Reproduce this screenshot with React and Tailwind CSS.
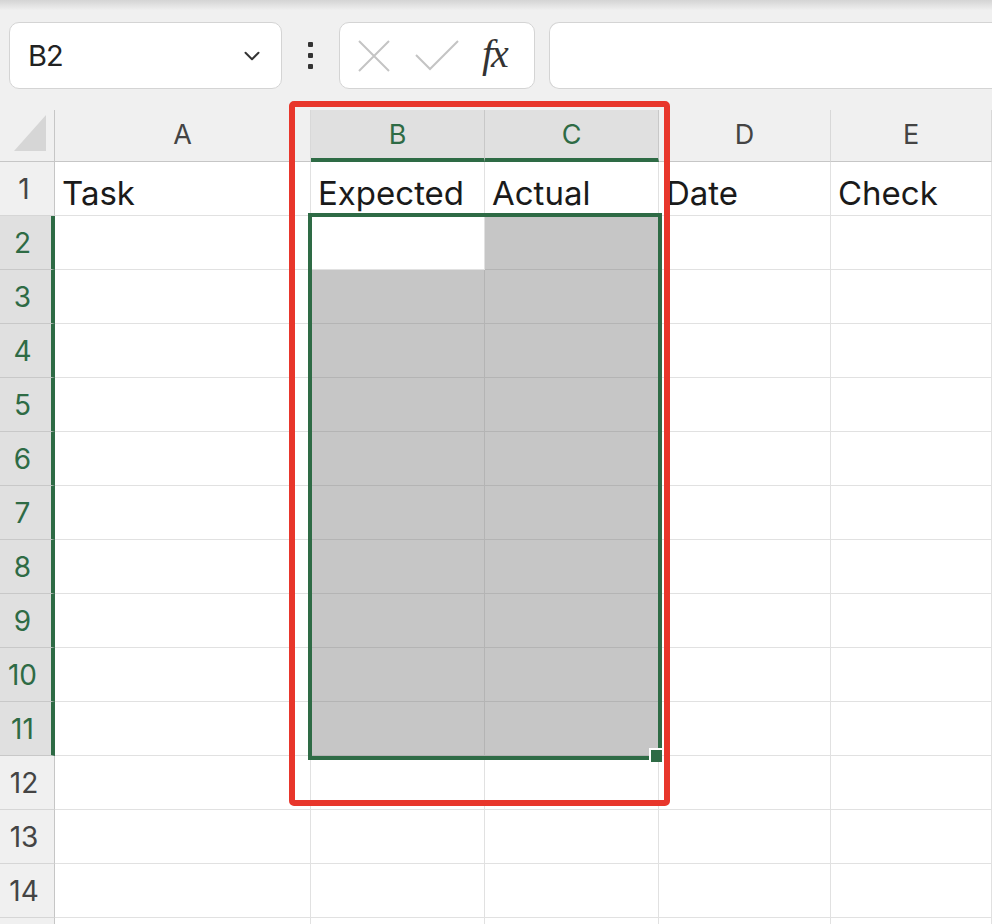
import { ChevronDown } from 'lucide-react';

const FONT = { fontFamily: "'Inter', 'Noto Sans', sans-serif" };

const COLS = ['A', 'B', 'C', 'D', 'E'];
const HEADER_ROW = ['Task', 'Expected', 'Actual', 'Date', 'Check'];
const ROWS = [1, 2, 3, 4, 5, 6, 7, 8, 9, 10, 11, 12, 13, 14, 15];

const isSelCol = (c) => c === 'B' || c === 'C';
const isSelRow = (r) => r >= 2 && r <= 11;

function Toolbar() {
  return (
    <div className="h-[110px] relative">
      <div className="absolute inset-x-0 top-0 h-[10px] bg-gradient-to-b from-[#d4d4d4] to-[#efefef]" />
      <div className="flex items-start pt-[22px] pl-[9px]">
        {/* Name box */}
        <div className="w-[273px] h-[67px] bg-white border border-[#d4d4d4] rounded-[10px] flex items-center justify-between pl-[18px] pr-[16px]">
          <span className="text-[29px] text-[#222] tracking-[-1px]">B2</span>
          <ChevronDown size={26} strokeWidth={1.8} className="text-[#333]" />
        </div>
        {/* Dots */}
        <div className="w-[57px] h-[67px] flex flex-col items-center justify-center gap-[6px]">
          <div className="w-[5px] h-[5px] bg-[#333] rounded-[1px]" />
          <div className="w-[5px] h-[5px] bg-[#333] rounded-[1px]" />
          <div className="w-[5px] h-[5px] bg-[#333] rounded-[1px]" />
        </div>
        {/* Cancel / Enter / fx */}
        <div className="w-[196px] h-[67px] bg-white border border-[#d4d4d4] rounded-[10px] flex items-center pl-[16px] gap-[22px]">
          <svg width="36" height="36" viewBox="0 0 36 36">
            <path d="M3 3 L33 33 M33 3 L3 33" stroke="#c4c4c4" strokeWidth="2" fill="none" />
          </svg>
          <svg width="46" height="34" viewBox="0 0 46 34">
            <path d="M2 16 L16 30 L44 2" stroke="#c4c4c4" strokeWidth="2" fill="none" />
          </svg>
          <span
            className="text-[40px] italic text-[#333] leading-none -mt-[4px] tracking-[-2px]"
            style={{ fontFamily: "'Liberation Serif', 'DejaVu Serif', serif" }}
          >
            fx
          </span>
        </div>
        {/* Formula bar */}
        <div className="ml-[14px] flex-1 h-[67px] bg-white border border-[#d4d4d4] rounded-l-[10px] border-r-0" />
      </div>
    </div>
  );
}

function ColumnHeaders() {
  return (
    <>
      <div className="h-[52px] bg-[#f0f0f0] border-b border-r border-[#c6c6c6] relative">
        <svg className="absolute left-[14px] top-[5px]" width="32" height="36" viewBox="0 0 32 36">
          <path d="M32 0 L32 36 L0 36 Z" fill="#d6d6d6" />
        </svg>
      </div>
      {COLS.map((c) => (
        <div
          key={c}
          className={
            isSelCol(c)
              ? 'h-[52px] bg-[#e0e0e0] border-r border-[#c8c8c8] border-b-[4px] border-b-[#2e6b45] flex items-center justify-center text-[27px] text-[#2e6b45] pt-[2px]'
              : 'h-[52px] bg-[#f0f0f0] border-r border-b border-[#d8d8d8] border-b-[#c6c6c6] flex items-center justify-center text-[27px] text-[#444]'
          }
        >
          {c}
        </div>
      ))}
    </>
  );
}

function cellClass(r, c) {
  const grey = isSelCol(c) && isSelRow(r) && !(r === 2 && c === 'B');
  if (grey) return 'h-[54px] bg-[#c6c6c6] border-r border-b border-[#b4b4b4]';
  return 'h-[54px] bg-white border-r border-b border-[#e1e1e1] flex items-end pl-[7px] pb-[5px] text-[33px] leading-none text-[#1a1a1a] whitespace-nowrap';
}

export default function App() {
  return (
    <div className="w-[992px] h-[924px] overflow-hidden bg-[#f0f0f0] relative" style={FONT}>
      <Toolbar />

      <div className="grid grid-cols-[55px_256px_174px_174px_172px_1fr]">
        <ColumnHeaders />
        {ROWS.map((r) => (
          <div key={r} className="contents">
            <div
              className={
                isSelRow(r)
                  ? 'h-[54px] bg-[#e0e0e0] border-b border-[#c8c8c8] border-r-[4px] border-r-[#2e6b45] flex items-center justify-center pr-[6px] text-[28px] text-[#2e6b45]'
                  : 'h-[54px] bg-[#f0f0f0] border-b border-[#d6d6d6] border-r border-r-[#c6c6c6] flex items-center justify-center pr-[6px] text-[28px] text-[#444]'
              }
            >
              {r < 15 ? r : null}
            </div>
            {COLS.map((c, i) => (
              <div key={c} className={cellClass(r, c)}>
                {r === 1 ? HEADER_ROW[i] : null}
              </div>
            ))}
          </div>
        ))}
      </div>

      {/* Selection border B2:C11 */}
      <div className="absolute left-[308px] top-[213px] w-[354px] h-[547px] border-[4px] border-[#2e6b45] pointer-events-none" />
      <div className="absolute left-[649px] top-[748px] w-[13px] h-[14px] bg-[#2e6b45] border-l-2 border-t-2 border-white pointer-events-none" />

      {/* Red highlight box */}
      <div className="absolute left-[289px] top-[101px] w-[381px] h-[705px] border-[6px] border-[#e8362b] rounded-[5px] pointer-events-none" />
    </div>
  );
}
